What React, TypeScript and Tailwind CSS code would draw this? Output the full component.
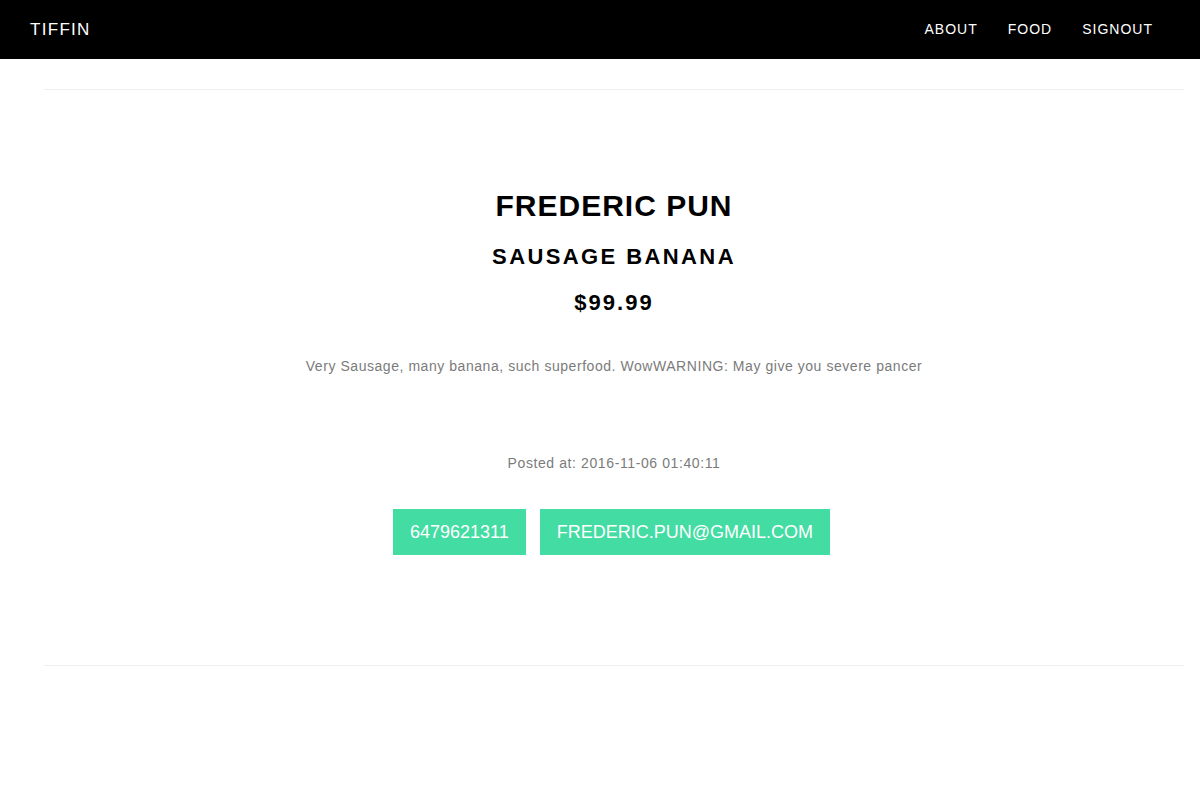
export default function App() {
  return (
    <div className="min-h-[807px] bg-white font-['Liberation_Sans',Arial,sans-serif]">
      {/* Nav */}
      <nav className="h-[59px] bg-black flex items-center justify-between pl-[30px] pr-[47px]">
        <a className="text-white text-[17px] tracking-[1.3px]">TIFFIN</a>
        <ul className="flex items-center gap-[30px]">
          <li className="text-white text-[14px] tracking-[1px]">ABOUT</li>
          <li className="text-white text-[14px] tracking-[1px]">FOOD</li>
          <li className="text-white text-[14px] tracking-[1px]">SIGNOUT</li>
        </ul>
      </nav>

      <div className="ml-[44px] mr-[16px]">
        <hr className="mt-[30px] border-t border-[#eeeeee]" />

        <div className="flex flex-col items-center text-center">
          <h1 className="mt-[99px] text-[30px] leading-[34px] font-bold tracking-[1px] text-black">FREDERIC PUN</h1>
          <h2 className="mt-[21px] text-[22px] leading-[26px] font-bold tracking-[2.4px] text-black">SAUSAGE BANANA</h2>
          <h3 className="mt-[20px] text-[22px] leading-[26px] font-bold tracking-[2px] text-black">$99.99</h3>

          <p className="mt-[40px] text-[14px] leading-[20px] tracking-[0.55px] text-[#7b7b7b]">
            Very Sausage, many banana, such superfood. WowWARNING: May give you severe pancer
          </p>

          <p className="mt-[77px] text-[14px] leading-[20px] tracking-[0.6px] text-[#7b7b7b]">
            Posted at: 2016-11-06 01:40:11
          </p>

          <div className="mt-[36px] mr-[5px] flex gap-[14px]">
            <a className="h-[46px] px-[17px] flex items-center bg-[#43dca3] text-white text-[18px]">6479621311</a>
            <a className="h-[46px] px-[17px] flex items-center bg-[#43dca3] text-white text-[18px]">FREDERIC.PUN@GMAIL.COM</a>
          </div>
        </div>

        <hr className="mt-[110px] border-t border-[#eeeeee]" />
      </div>
    </div>
  );
}
